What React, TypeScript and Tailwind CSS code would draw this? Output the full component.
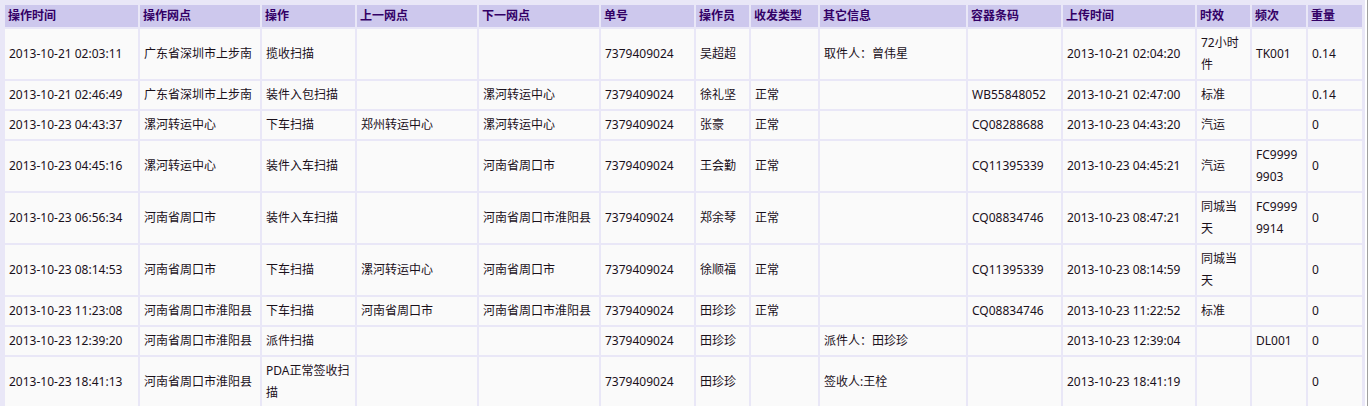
import React from "react";

const headers = [
  "操作时间",
  "操作网点",
  "操作",
  "上一网点",
  "下一网点",
  "单号",
  "操作员",
  "收发类型",
  "其它信息",
  "容器条码",
  "上传时间",
  "时效",
  "频次",
  "重量",
];

// column widths (cell border-box)
const widths = [133, 120, 93, 120, 120, 93, 53, 67, 146, 93, 132, 53, 54, 54];

const rows: string[][] = [
  ["2013-10-21 02:03:11", "广东省深圳市上步南", "揽收扫描", "", "", "7379409024", "吴超超", "", "取件人：曾伟星", "", "2013-10-21 02:04:20", "72小时件", "TK001", "0.14"],
  ["2013-10-21 02:46:49", "广东省深圳市上步南", "装件入包扫描", "", "漯河转运中心", "7379409024", "徐礼坚", "正常", "", "WB55848052", "2013-10-21 02:47:00", "标准", "", "0.14"],
  ["2013-10-23 04:43:37", "漯河转运中心", "下车扫描", "郑州转运中心", "漯河转运中心", "7379409024", "张豪", "正常", "", "CQ08288688", "2013-10-23 04:43:20", "汽运", "", "0"],
  ["2013-10-23 04:45:16", "漯河转运中心", "装件入车扫描", "", "河南省周口市", "7379409024", "王会勤", "正常", "", "CQ11395339", "2013-10-23 04:45:21", "汽运", "FC99999903", "0"],
  ["2013-10-23 06:56:34", "河南省周口市", "装件入车扫描", "", "河南省周口市淮阳县", "7379409024", "郑余琴", "正常", "", "CQ08834746", "2013-10-23 08:47:21", "同城当天", "FC99999914", "0"],
  ["2013-10-23 08:14:53", "河南省周口市", "下车扫描", "漯河转运中心", "河南省周口市", "7379409024", "徐顺福", "正常", "", "CQ11395339", "2013-10-23 08:14:59", "同城当天", "", "0"],
  ["2013-10-23 11:23:08", "河南省周口市淮阳县", "下车扫描", "河南省周口市", "河南省周口市淮阳县", "7379409024", "田珍珍", "正常", "", "CQ08834746", "2013-10-23 11:22:52", "标准", "", "0"],
  ["2013-10-23 12:39:20", "河南省周口市淮阳县", "派件扫描", "", "", "7379409024", "田珍珍", "", "派件人：田珍珍", "", "2013-10-23 12:39:04", "", "DL001", "0"],
  ["2013-10-23 18:41:13", "河南省周口市淮阳县", "PDA正常签收扫描", "", "", "7379409024", "田珍珍", "", "签收人:王栓", "", "2013-10-23 18:41:19", "", "", "0"],
];

export default function App() {
  return (
    <div
      className="flex h-[406px] w-[1371px] overflow-hidden bg-white"
      style={{ fontFamily: '"Noto Sans", "Noto Sans CJK SC", sans-serif' }}
    >
      <div className="w-[1365px] shrink-0 bg-[#e9e7f7] pl-[3px] pt-[3px]">
        <table className="w-[1361px] table-fixed border-separate border-spacing-[2px] text-[12px]">
          <colgroup>
            {widths.map((w, i) => (
              <col key={i} style={{ width: w }} />
            ))}
          </colgroup>
          <thead>
            <tr>
              {headers.map((h) => (
                <th
                  key={h}
                  className="bg-[#cdc8ed] px-[3px] text-left align-middle font-bold leading-[22px] text-[#330066]"
                >
                  {h}
                </th>
              ))}
            </tr>
          </thead>
          <tbody>
            {rows.map((r, i) => (
              <tr key={i}>
                {r.map((c, j) => (
                  <td
                    key={j}
                    className="break-all bg-[#fafafa] px-[4px] py-[3px] align-middle leading-[22px] text-[#1a101a]"
                  >
                    {c}
                  </td>
                ))}
              </tr>
            ))}
          </tbody>
        </table>
      </div>
      <div className="w-[2px] shrink-0 bg-white"></div>
      <div className="w-[1px] shrink-0 bg-[#a0a0a0]"></div>
    </div>
  );
}
